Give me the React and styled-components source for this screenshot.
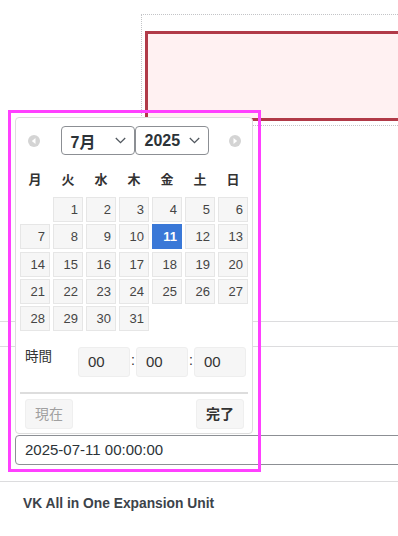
import React from "react";
import styled, { createGlobalStyle } from "styled-components";

const Global = createGlobalStyle`
  html, body { margin: 0; padding: 0; background: #fff; }
  body { font-family: "Liberation Sans", "Noto Sans CJK JP", sans-serif; color: #333; }
  * { box-sizing: border-box; }
`;

const Page = styled.div`
  position: relative;
  width: 398px;
  height: 536px;
  overflow: hidden;
  background: #fff;
`;

const TopBand = styled.div`
  display: flex;
  padding: 14px 0 0 141px;
`;

const DottedBox = styled.div`
  flex: 1;
  height: 112px;
  border: 1px dotted #c3c4c7;
  border-right: none;
  padding: 16px 0 0 3px;
`;

const RedBox = styled.div`
  height: 90px;
  border: 3px solid #b13a48;
  border-right: none;
  background: #fff1f2;
`;

const Rows = styled.div`
  margin-top: 195px;
`;

const Row = styled.div`
  border-top: 1px solid #dcdcde;
  height: ${(p) => p.$h}px;
  padding: ${(p) => p.$pad || "0"};
`;

const DateInput = styled.div`
  margin-left: 15px;
  width: 420px;
  height: 30px;
  border: 1px solid #8c8f94;
  border-radius: 4px;
  padding: 0 9px;
  font-size: 15px;
  line-height: 28px;
  color: #2c3338;
`;

const Title = styled.div`
  font-size: 13.8px;
  font-weight: 700;
  line-height: 20px;
  color: #3c434a;
`;

const Picker = styled.div`
  position: absolute;
  left: 15px;
  top: 117px;
  width: 238px;
  height: 317px;
  background: #fff;
  border: 1px solid #dddddd;
  border-radius: 4px;
  padding: 0 4px;
  z-index: 5;
`;

const Header = styled.div`
  margin-top: 8px;
  height: 29px;
  display: flex;
  align-items: center;
  justify-content: space-between;
  padding: 0 7px 0 8px;
`;

const Selects = styled.div`
  display: flex;
`;

const SelectBox = styled.div`
  width: 74px;
  height: 29px;
  border: 1px solid #8c8f94;
  border-radius: 4px;
  display: flex;
  align-items: center;
  justify-content: space-between;
  padding: 0 8px 0 9px;
  font-size: 16px;
  font-weight: 700;
  color: #2c3338;
`;

const WeekRow = styled.div`
  margin-top: 15px;
  display: grid;
  grid-template-columns: repeat(7, 1fr);
  column-gap: 3px;
  height: 20px;
  line-height: 20px;
  text-align: center;
  font-size: 13px;
  font-weight: 700;
  color: #333;
`;

const DaysGrid = styled.div`
  margin-top: 7px;
  display: grid;
  grid-template-columns: repeat(7, 1fr);
  grid-auto-rows: 25px;
  column-gap: 3px;
  row-gap: 2.25px;
`;

const Day = styled.div`
  border: 1px solid ${(p) => (p.$active ? "#3a78d7" : "#e6e6e6")};
  background: ${(p) => (p.$active ? "#3a78d7" : "#f6f6f6")};
  color: ${(p) => (p.$active ? "#fff" : "#454545")};
  font-weight: ${(p) => (p.$active ? 700 : 400)};
  font-size: 13px;
  line-height: 23px;
  text-align: right;
  padding-right: 4px;
`;

const Blank = styled.div``;

const TimeRow = styled.div`
  margin-top: 16px;
  display: flex;
  align-items: flex-start;
  padding-left: 5px;
`;

const TimeLabel = styled.div`
  width: 53px;
  font-size: 13.5px;
  line-height: 20px;
  color: #333;
`;

const TimeBox = styled.div`
  width: 52px;
  height: 30px;
  background: #f6f6f6;
  border: 1px solid #eeeeee;
  border-radius: 3px;
  padding-left: 9px;
  font-size: 15px;
  line-height: 28px;
  color: #333;
`;

const Colon = styled.div`
  width: 6px;
  text-align: center;
  font-size: 14px;
  line-height: 26px;
  color: #333;
`;

const Divider = styled.div`
  margin-top: 15px;
  height: 2px;
  background: #dddddd;
`;

const ButtonRow = styled.div`
  margin-top: 5px;
  display: flex;
  justify-content: space-between;
  padding: 0 4px 0 5px;
`;

const Btn = styled.div`
  width: 48px;
  height: 30px;
  background: #f6f6f6;
  border: 1px solid #efefef;
  border-radius: 3px;
  text-align: center;
  line-height: 28px;
  font-size: 14px;
  font-weight: ${(p) => (p.$primary ? 700 : 400)};
  color: ${(p) => (p.$primary ? "#333" : "#a0a0a0")};
`;

const Highlight = styled.div`
  position: absolute;
  left: 8px;
  top: 110px;
  width: 253px;
  height: 362px;
  border: 3px solid #ff40ff;
  pointer-events: none;
  z-index: 10;
`;

const NavIcon = ({ dir }) => (
  <svg width="12" height="12" viewBox="0 0 12 12">
    <circle cx="6" cy="6" r="6" fill="#d4d4d4" />
    {dir === "prev" ? (
      <polygon points="7.5,3 3.8,6 7.5,9" fill="#fff" />
    ) : (
      <polygon points="4.5,3 8.2,6 4.5,9" fill="#fff" />
    )}
  </svg>
);

const Chevron = () => (
  <svg width="11" height="7" viewBox="0 0 11 7">
    <polyline points="0.8,1 5.5,5.6 10.2,1" fill="none" stroke="#50575e" strokeWidth="1.3" />
  </svg>
);

const weekdays = ["月", "火", "水", "木", "金", "土", "日"];

export default function App() {
  const cells = [null];
  for (let d = 1; d <= 31; d++) cells.push(d);
  return (
    <Page>
      <Global />
      <TopBand>
        <DottedBox>
          <RedBox />
        </DottedBox>
      </TopBand>
      <Rows>
        <Row $h={25} />
        <Row $h={135} $pad="88px 0 0 0">
          <DateInput>2025-07-11 00:00:00</DateInput>
        </Row>
        <Row $h={60} $pad="12px 0 0 23px">
          <Title>VK All in One Expansion Unit</Title>
        </Row>
      </Rows>

      <Picker>
        <Header>
          <NavIcon dir="prev" />
          <Selects>
            <SelectBox>
              <span>7月</span>
              <Chevron />
            </SelectBox>
            <SelectBox>
              <span>2025</span>
              <Chevron />
            </SelectBox>
          </Selects>
          <NavIcon dir="next" />
        </Header>
        <WeekRow>
          {weekdays.map((w) => (
            <div key={w}>{w}</div>
          ))}
        </WeekRow>
        <DaysGrid>
          {cells.map((d, i) =>
            d === null ? (
              <Blank key={"b" + i} />
            ) : (
              <Day key={d} $active={d === 11}>
                {d}
              </Day>
            )
          )}
        </DaysGrid>
        <TimeRow>
          <TimeLabel>時間</TimeLabel>
          <TimeBox>00</TimeBox>
          <Colon>:</Colon>
          <TimeBox>00</TimeBox>
          <Colon>:</Colon>
          <TimeBox>00</TimeBox>
        </TimeRow>
        <Divider />
        <ButtonRow>
          <Btn>現在</Btn>
          <Btn $primary>完了</Btn>
        </ButtonRow>
      </Picker>

      <Highlight />
    </Page>
  );
}
